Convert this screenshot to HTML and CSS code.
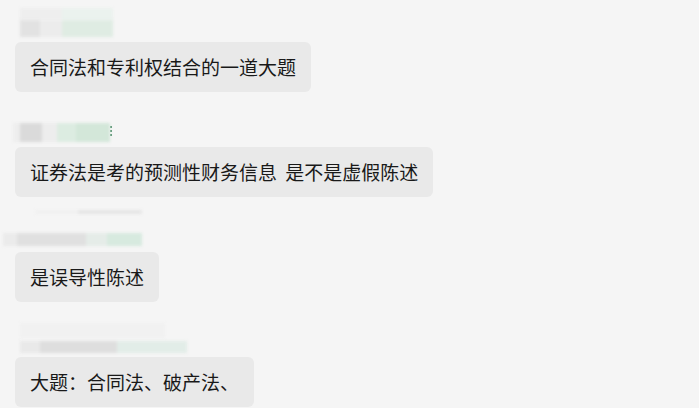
FILE: index.html
```html
<!DOCTYPE html>
<html lang="zh-CN">
<head>
  <meta charset="UTF-8">
  <title>聊天记录</title>
  <link rel="stylesheet" href="styles.css">
</head>
<body>
  <div class="chat">
    <div class="msg">
      <div class="name name-1">
        <div class="mask mask-top"></div>
        <div class="mask mask-main"></div>
      </div>
      <div class="bubble">合同法和专利权结合的一道大题</div>
    </div>
    <div class="msg">
      <div class="name name-2">
        <div class="mask mask-main"></div>
        <div class="tick"></div>
      </div>
      <div class="bubble">证券法是考的预测性财务信息 是不是虚假陈述</div>
    </div>
    <div class="msg">
      <div class="name name-3">
        <div class="mask mask-line"></div>
        <div class="mask mask-main"></div>
      </div>
      <div class="bubble">是误导性陈述</div>
    </div>
    <div class="msg">
      <div class="name name-4">
        <div class="mask mask-top"></div>
        <div class="mask mask-main"></div>
      </div>
      <div class="bubble">大题：合同法、破产法、</div>
    </div>
  </div>
</body>
</html>
```

FILE: styles.css
```css
body {
  margin: 0;
  padding: 0;
  background-color: #f5f5f5;
  font-family: "Noto Sans CJK SC", "Noto Sans", sans-serif;
  overflow: hidden;
}
.chat {
  display: flex;
  flex-direction: column;
  align-items: flex-start;
  padding-left: 15px;
}
.msg {
  display: flex;
  flex-direction: column;
  align-items: flex-start;
  margin-bottom: 13px;
}
.bubble {
  background-color: #e9e9e9;
  color: #191919;
  font-size: 19px;
  line-height: 24px;
  padding: 13px 15px;
  border-radius: 6px;
  white-space: nowrap;
  word-spacing: 4px;
}
.name {
  height: 42px;
  display: flex;
  flex-direction: column;
  align-items: flex-start;
}
.mask {
  filter: blur(1.5px);
}
.name-1 {
  padding: 8px 0 0 5px;
  box-sizing: border-box;
}
.name-1 .mask-top {
  width: 93px;
  height: 12px;
  background: linear-gradient(to right, #eeeeee 0 45%, #ebf2ee 45%);
}
.name-1 .mask-main {
  width: 93px;
  height: 17px;
  background: linear-gradient(to right, #e2e2e2 0 22%, #ececec 22% 45%, #dfece3 45%);
}
.name-2 {
  flex-direction: row;
  align-items: flex-start;
  padding: 18px 0 0 0;
  margin-left: -2px;
  box-sizing: border-box;
}
.name-2 .mask-main {
  width: 97px;
  height: 19px;
  background: linear-gradient(to right, #eeeeee 0 7%, #dadada 7% 30%, #ededed 30% 45%, #dcece1 45% 65%, #d3e7d9 65%);
}
.tick {
  width: 2px;
  height: 10px;
  margin-top: 3px;
  background: repeating-linear-gradient(to bottom, #5a9274 0 2px, transparent 2px 4px);
}
.name-3 {
  margin-left: -12px;
  box-sizing: border-box;
}
.name-3 .mask-line {
  width: 107px;
  height: 4px;
  margin: 0 0 19px 32px;
  background: linear-gradient(to right, #f1f1f1 0 40%, #e6e6e6 40%);
}
.name-3 .mask-main {
  width: 139px;
  height: 13px;
  background: linear-gradient(to right, #ebebeb 0 10%, #e0e0e0 10% 60%, #e5ece8 60% 75%, #d7eadf 75%);
}
.name-4 {
  padding: 8px 0 0 5px;
  box-sizing: border-box;
}
.name-4 .mask-top {
  width: 145px;
  height: 15px;
  background: #f1f1f1;
  margin-bottom: 3px;
}
.name-4 .mask-main {
  width: 167px;
  height: 12px;
  background: linear-gradient(to right, #e9e9e9 0 12%, #dedede 12% 58%, #e2ede8 58%);
}
```
